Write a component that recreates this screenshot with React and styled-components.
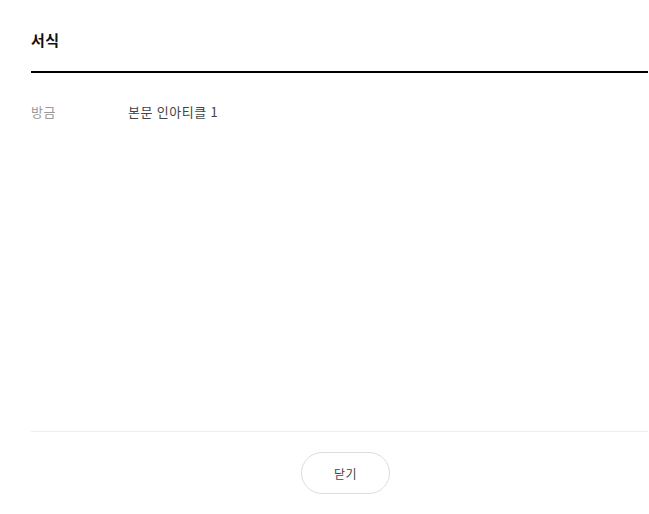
import React from "react";
import styled, { createGlobalStyle } from "styled-components";

const Global = createGlobalStyle`
  html, body { margin: 0; padding: 0; background: #fff; }
  body { font-family: "Noto Sans CJK KR", "Noto Sans", sans-serif; color: #222; }
`;

const Dialog = styled.div`
  display: flex;
  flex-direction: column;
  height: 514px;
  padding: 0 1px 0 31px;
  box-sizing: border-box;
`;

const Header = styled.div`
  display: flex;
  align-items: center;
  border-bottom: 2px solid #000;
  box-sizing: border-box;
  height: 73px;
`;

const Title = styled.h2`
  margin: 0;
  font-size: 15px;
  font-weight: 700;
  letter-spacing: 0.5px;
  color: #111;
  line-height: 1;
  transform: translateY(4px);
`;

const Body = styled.div`
  flex: 1;
  padding-top: 30px;
`;

const Row = styled.div`
  display: grid;
  grid-template-columns: 97px 1fr;
  font-size: 13px;
  letter-spacing: 0.6px;
  line-height: 18px;
`;

const Label = styled.span`
  color: #999;
`;

const Value = styled.span`
  color: #444;
`;

const Footer = styled.div`
  border-top: 1px solid #eee;
  display: flex;
  justify-content: center;
  padding: 20px 0 20px 12px;
`;

const Button = styled.button`
  width: 89px;
  height: 42px;
  border: 1px solid #ddd;
  border-radius: 21px;
  background: #fff;
  font-family: inherit;
  font-size: 12px;
  letter-spacing: 0.5px;
  color: #444;
  cursor: pointer;
`;

export default function App() {
  return (
    <>
      <Global />
      <Dialog>
        <Header>
          <Title>서식</Title>
        </Header>
        <Body>
          <Row>
            <Label>방금</Label>
            <Value>본문 인아티클 1</Value>
          </Row>
        </Body>
        <Footer>
          <Button>닫기</Button>
        </Footer>
      </Dialog>
    </>
  );
}
